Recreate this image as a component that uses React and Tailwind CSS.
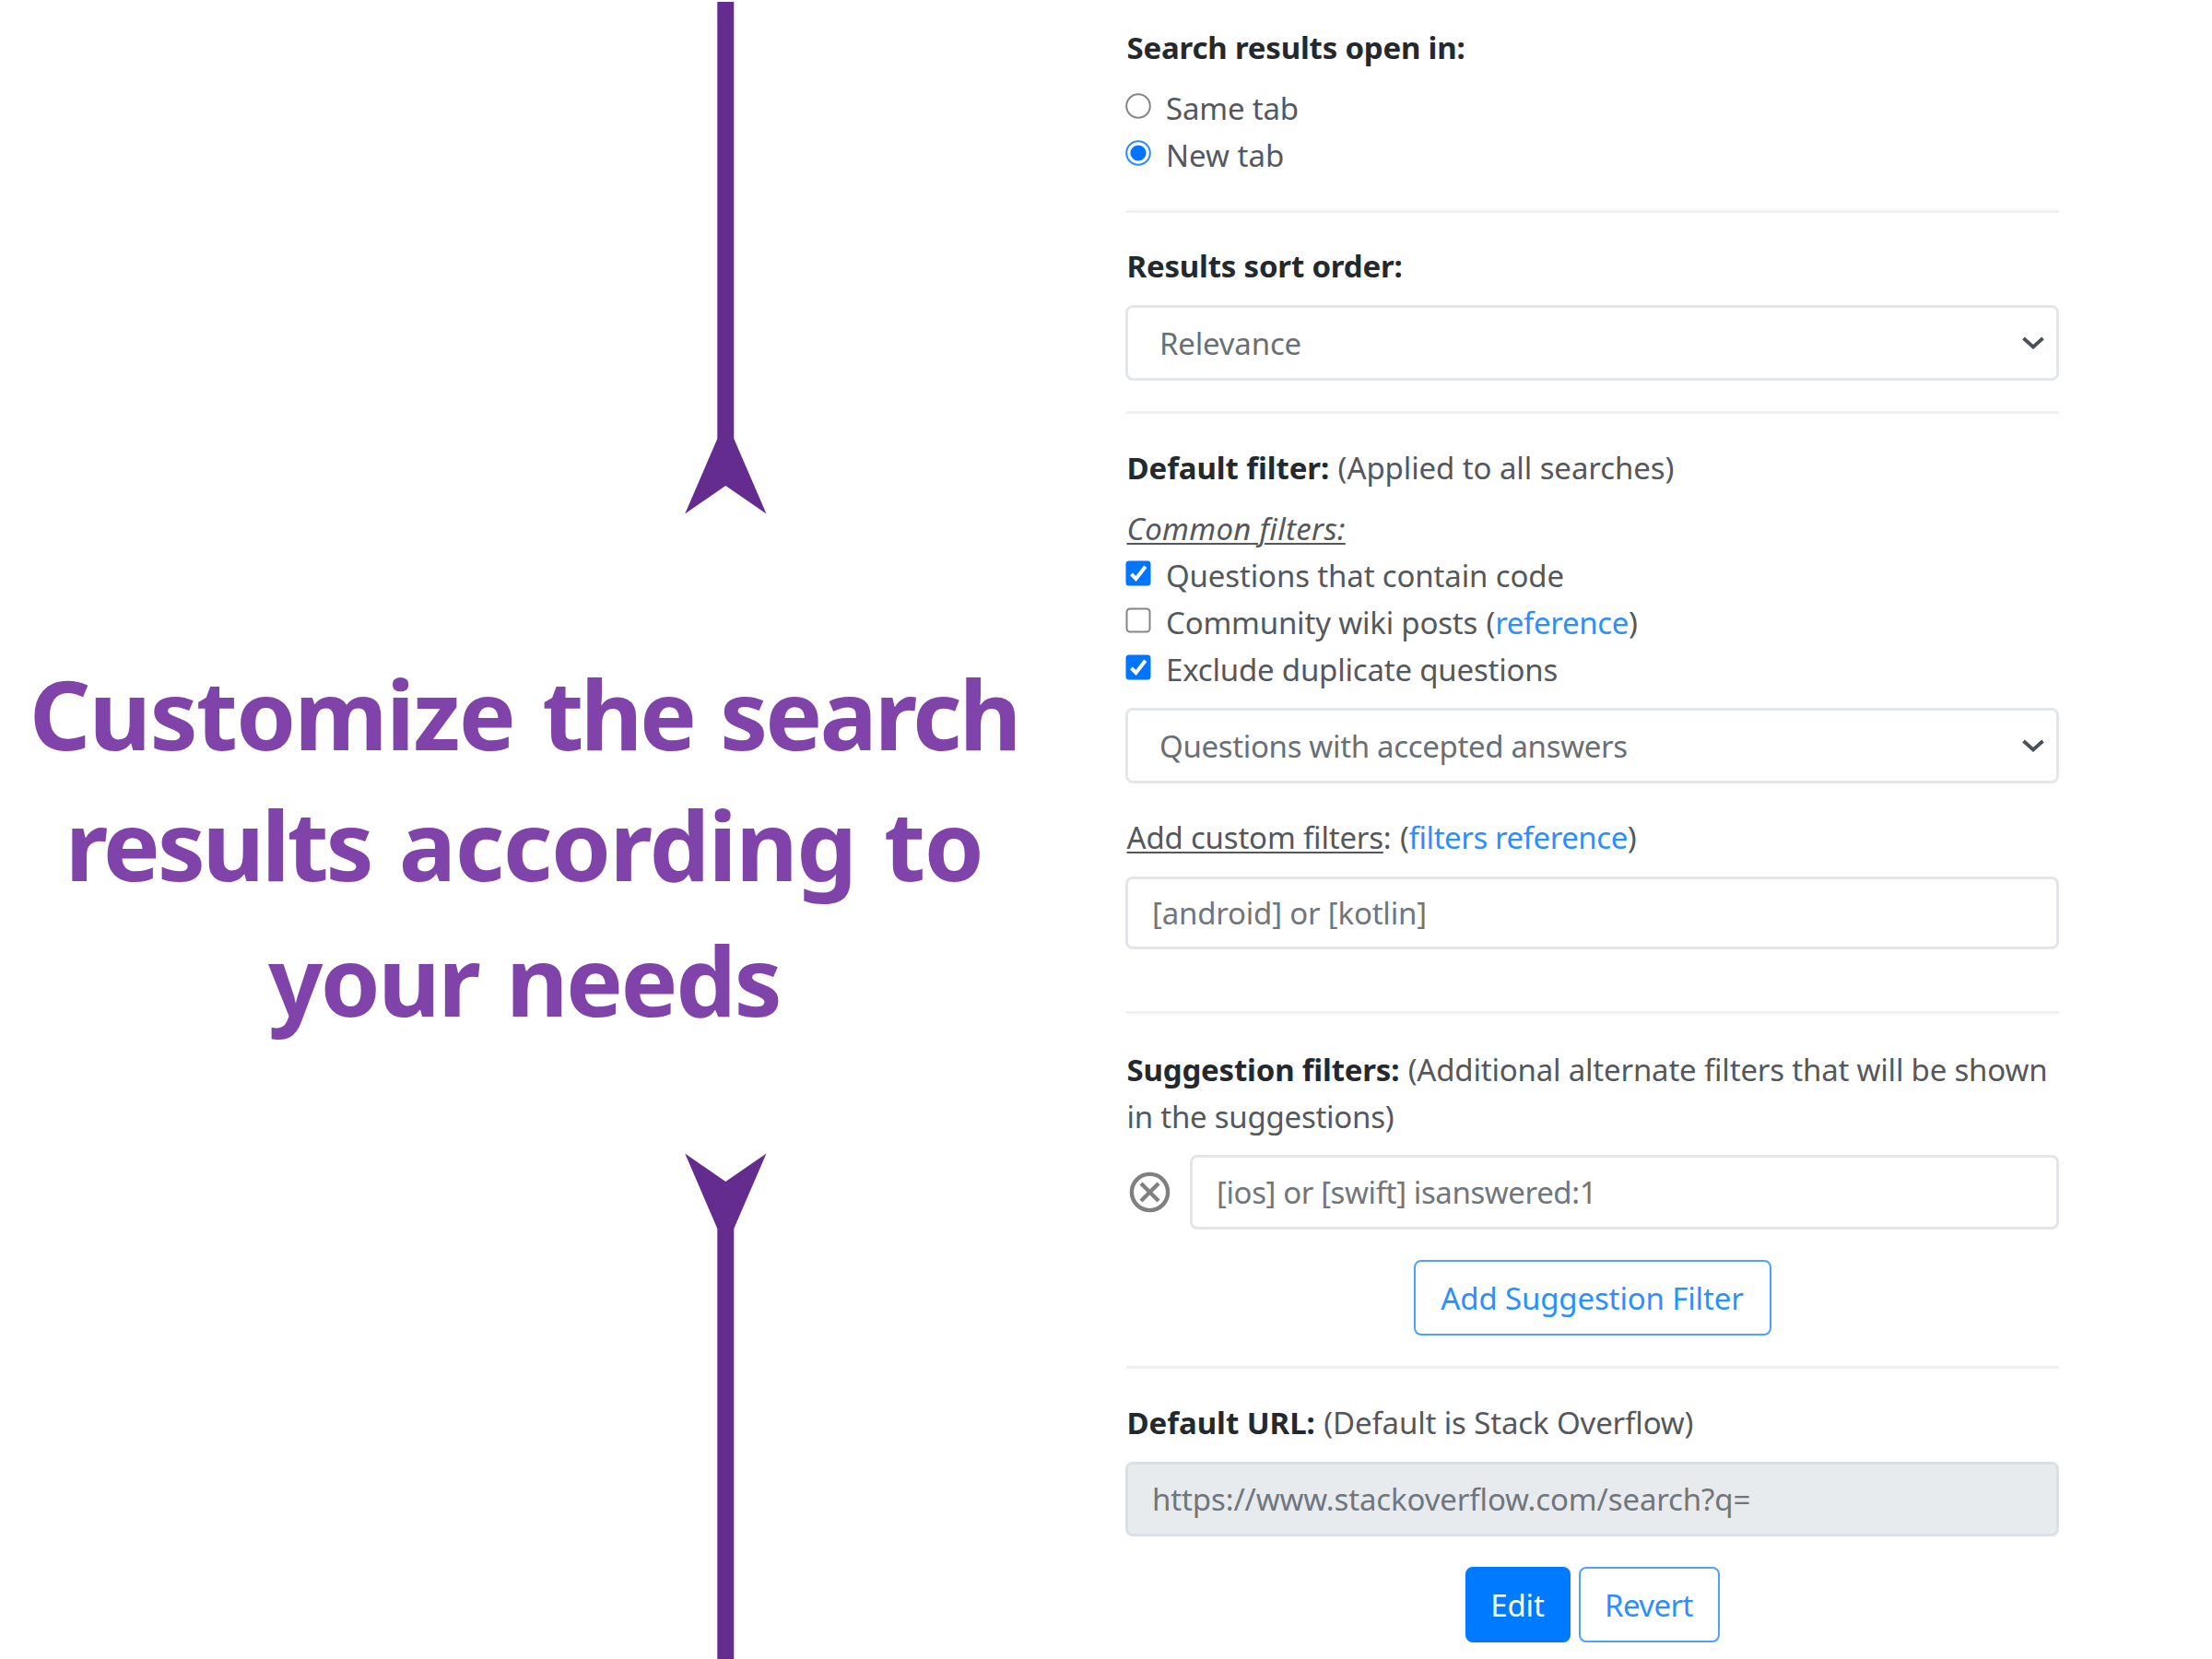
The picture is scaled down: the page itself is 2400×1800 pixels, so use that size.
import React from "react";

function Divider({ className = "" }) {
  return <hr className={`ml-px h-[3px] shrink-0 border-0 bg-[#f0f0f0] ${className}`} />;
}

function Row({ className = "", children }) {
  return <div className={`h-[51px] shrink-0 pl-[1.5px] whitespace-pre leading-[51px] ${className}`}>{children}</div>;
}

function Title({ className = "", children }) {
  return <strong className={`font-bold text-[#24292e] ${className}`}>{children}</strong>;
}

function Radio({ checked }) {
  return (
    <svg className="mt-[9px] h-7 w-7 shrink-0" viewBox="0 0 28 28" fill="none">
      <circle cx="14" cy="14" r="12.8" stroke={checked ? "#2b8bff" : "#858585"} strokeWidth="2" />
      {checked && <circle cx="14" cy="14" r="8.6" fill="#0075ff" />}
    </svg>
  );
}

function Checkbox({ checked }) {
  return (
    <svg className="mt-[9px] h-7 w-7 shrink-0" viewBox="0 0 28 28" fill="none">
      {checked ? (
        <>
          <rect x="0.5" y="0.5" width="27" height="27" rx="3.5" fill="#0075ff" />
          <path d="M6.5 14.8 L11.5 20 L21.8 6.8" stroke="#fff" strokeWidth="4" />
        </>
      ) : (
        <rect x="1.5" y="1.5" width="25" height="25" rx="3.5" stroke="#858585" strokeWidth="2" />
      )}
    </svg>
  );
}

function Option({ control, className = "", children }) {
  return (
    <label className="flex h-[51px] shrink-0 items-start">
      {control}
      <span className={`ml-[16px] whitespace-pre leading-[51px] ${className}`}>{children}</span>
    </label>
  );
}

function Select({ className = "", children }) {
  return (
    <div className={`flex h-[82px] shrink-0 items-center justify-between rounded-[8px] border-[3px] border-[#e4e7ea] pr-[12px] pl-[34px] text-[#686f76] ${className}`}>
      <span className="whitespace-pre pt-px leading-[51px]">{children}</span>
      <svg className="h-[16px] w-[26px]" viewBox="0 0 26 16" fill="none">
        <path d="M2.5 3 L13 12.5 L23.5 3" stroke="#495057" strokeWidth="3.8" />
      </svg>
    </div>
  );
}

function Field({ className = "", children }) {
  return (
    <div className={`flex items-center rounded-[8px] border-[3px] border-[#e2e6ea] pl-[26px] text-[#6f767d] ${className}`}>
      <span className="whitespace-pre leading-[51px]">{children}</span>
    </div>
  );
}

function Button({ className = "", children }) {
  return (
    <button className={`flex h-[82px] items-center justify-center rounded-[8px] border-[2.5px] border-[#4da2ff] text-[#2a8fff] ${className}`}>
      <span className="whitespace-pre leading-[51px]">{children}</span>
    </button>
  );
}

export default function App() {
  return (
    <div className="flex h-[1800px] w-[2400px] overflow-hidden bg-white font-['Noto_Sans','Open_Sans',sans-serif]">
      <section className="flex w-[1221px] shrink-0 flex-col">
        <svg className="ml-[743px] h-[558px] w-[89px] shrink-0" viewBox="0 0 89 558" fill="#642c8f">
          <path d="M35.3 2 H53.3 V476 L88.5 557.5 L44.3 527 L0.2 557.5 L35.3 476 Z" />
        </svg>
        <h1 className="mt-[144px] flex w-[1137px] flex-col items-center text-[104px] font-bold tracking-[-2.5px] text-[#7f43aa] [word-spacing:5px]">
          <span className="h-[142px] whitespace-pre leading-[144px]">
            <span className="tracking-[-1.8px]">Customize </span>
            <span className="tracking-[-3.5px]">the </span>
            <span className="tracking-[-3px]">search</span>
          </span>
          <span className="h-[147px] whitespace-pre leading-[144px]">
            <span className="tracking-[-3.3px]">results</span>
            <span className="tracking-[-1.5px]"> according to</span>
          </span>
          <span className="h-[144px] whitespace-pre leading-[144px]">your needs</span>
        </h1>
        <svg className="mt-[116px] ml-[743px] h-[549px] w-[89px] shrink-0" viewBox="0 0 89 549" fill="#642c8f">
          <path d="M35.3 549 H53.3 V82 L88.5 0.5 L44.3 31 L0.2 0.5 L35.3 82 Z" />
        </svg>
      </section>

      <main className="flex w-[1013px] shrink-0 flex-col pt-[26px] text-[33px] tracking-[-0.2px] text-[#54585d]">
        <Row><Title>Search results open in:</Title></Row>
        <div className="mt-[15px]">
          <Option control={<Radio />}>Same tab</Option>
          <Option control={<Radio checked />} className="tracking-[0px]">New tab</Option>
        </div>
        <Divider className="mt-[34px]" />

        <Row className="mt-[32px]"><Title>Results sort order:</Title></Row>
        <Select className="mt-[17px]">Relevance</Select>
        <Divider className="mt-[33px]" />

        <Row className="mt-[33px]">
          <Title className="tracking-[-0.1px]">Default filter:</Title>
          <span className="ml-px tracking-[-0.1px]"> (Applied to all searches)</span>
        </Row>
        <Row className="mt-[15px]">
          <span className="italic tracking-[0.3px] underline decoration-[2px] underline-offset-[3px]">Common filters:</span>
        </Row>
        <Option control={<Checkbox checked />} className="tracking-[-0.15px]">Questions that contain code</Option>
        <Option control={<Checkbox />}>
          Community wiki posts <span className="ml-px">(</span><a className="tracking-[-0.35px] text-[#2a8fff]">reference</a>)
        </Option>
        <Option control={<Checkbox checked />}>Exclude duplicate questions</Option>
        <Select className="mt-[16px] tracking-[-0.34px]">Questions with accepted answers</Select>
        <Row className="mt-[33px]">
          <span className="underline decoration-[2px] underline-offset-[3px]">Add custom filters</span>:<span className="ml-px"> (</span>
          <a className="tracking-[-0.45px] text-[#2a8fff]">filters reference</a>)
        </Row>
        <Field className="mt-[17px] h-[79px] shrink-0 tracking-[-0.2px]">[android] or [kotlin]</Field>
        <Divider className="mt-[67px]" />

        <Row className="mt-[35px]">
          <Title>Suggestion filters:</Title><span className="ml-px"> (Additional alternate filters that will be shown</span>
        </Row>
        <Row className="tracking-[-0.25px]">in the suggestions)</Row>
        <div className="mt-[16px] flex shrink-0 items-center">
          <svg className="-mt-px ml-[4px] h-[45px] w-[45px]" viewBox="0 0 45 45" fill="none" stroke="#808080" strokeWidth="4.4">
            <circle cx="22.5" cy="22.5" r="19.6" />
            <path d="M13 13 L32 32 M32 13 L13 32" />
          </svg>
          <Field className="ml-[21px] h-[81px] flex-1 tracking-[-0.4px]">[ios] or [swift] isanswered:1</Field>
        </div>
        <div className="mt-[33px] flex shrink-0 justify-center">
          <Button className="w-[388px] tracking-[-0.15px]">Add Suggestion Filter</Button>
        </div>
        <Divider className="mt-[33px]" />

        <Row className="mt-[33px] tracking-[-0.15px]">
          <Title className="tracking-[-0.05px]">Default URL:</Title><span className="ml-px"> (Default is Stack Overflow)</span>
        </Row>
        <Field className="mt-[17px] h-[81px] shrink-0 border-[#dbe0e4]! bg-[#e7ebee] tracking-[-0.13px]">
          https://www.stackoverflow.com/search?q=
        </Field>
        <div className="mt-[33px] flex shrink-0 justify-center gap-[9px]">
          <Button className="w-[114px] border-[#007bff]! bg-[#007bff] text-white!">Edit</Button>
          <Button className="w-[153px] tracking-[-0.6px]">Revert</Button>
        </div>
      </main>
    </div>
  );
}
